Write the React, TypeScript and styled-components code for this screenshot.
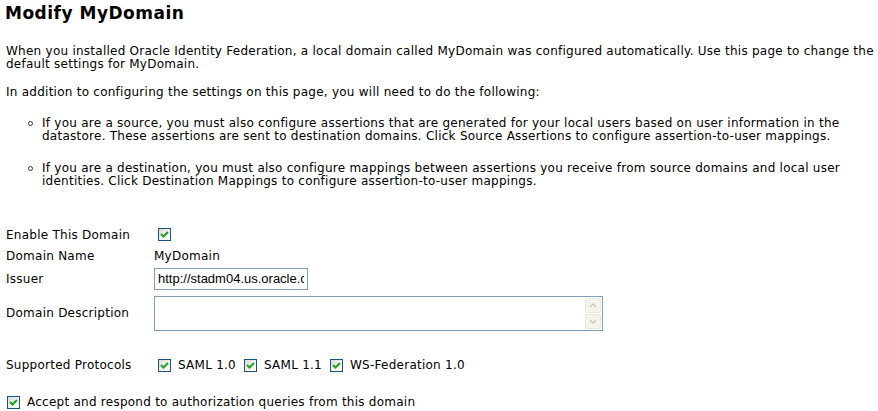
import React from "react";
import styled, { createGlobalStyle } from "styled-components";

const Global = createGlobalStyle`
  html, body { margin: 0; padding: 0; background: #fff; }
  body { font-family: "DejaVu Sans", Verdana, sans-serif; font-size: 12px; letter-spacing: 0.25px; color: #000; }
`;

const Page = styled.div`
  padding: 3px 0 0 6px;
`;

const Title = styled.h1`
  margin: 0 0 0 -1px;
  font-size: 17px;
  letter-spacing: 0.5px;
  line-height: 20px;
  font-weight: bold;
`;

const Para = styled.p<{ $top: number }>`
  margin: ${(p) => p.$top}px -6px 0 0;
  line-height: 13px;
`;

const List = styled.ul`
  margin: 18px 0 0 0;
  padding: 0 0 0 36px;
  list-style: none;
`;

const Item = styled.li`
  position: relative;
  line-height: 13px;
  margin-bottom: 19px;
  &:last-child { margin-bottom: 0; }
  &::before {
    content: "";
    position: absolute;
    left: -14px;
    top: 4px;
    width: 3px;
    height: 3px;
    border: 1px solid #333;
    border-radius: 50%;
  }
`;

const Form = styled.div`
  display: grid;
  grid-template-columns: 148px auto;
  margin-top: 36px;
  align-items: center;
`;

const Label = styled.div<{ $h: number }>`
  height: ${(p) => p.$h}px;
  display: flex;
  align-items: center;
`;

const Value = styled.div<{ $h: number }>`
  height: ${(p) => p.$h}px;
  display: flex;
  align-items: center;
  gap: 8px;
`;

const Box = styled.span`
  display: inline-flex;
  width: 13px;
  height: 13px;
  box-sizing: border-box;
  border: 1px solid #1c5180;
  background: linear-gradient(135deg, #dcdcd7 0%, #f4f4f0 60%, #ffffff 100%);
  align-items: center;
  justify-content: center;
  flex: none;
`;

const CheckWrap = styled.span<{ $ml: number }>`
  display: inline-flex;
  align-items: center;
  margin-left: ${(p) => p.$ml}px;
  gap: 7px;
`;

const Check = ({ ml = 4, label }: { ml?: number; label?: string }) => (
  <CheckWrap $ml={ml}>
    <Box>
      <svg width="9" height="9" viewBox="0 0 9 9">
        <path d="M1 4 L3.5 6.5 L8 2" stroke="#21a121" strokeWidth="2" fill="none" />
      </svg>
    </Box>
    {label && <span>{label}</span>}
  </CheckWrap>
);

const TextInput = styled.input`
  width: 154px;
  height: 22px;
  box-sizing: border-box;
  border: 1px solid #7f9db9;
  font-family: "Liberation Sans", Arial, sans-serif;
  font-size: 13px;
  letter-spacing: 0;
  padding: 0 3px;
  margin: 0;
  outline: none;
`;

const AreaWrap = styled.div`
  width: 449px;
  height: 35px;
  box-sizing: border-box;
  border: 1px solid #7f9db9;
  display: flex;
  background: #fff;
`;

const Area = styled.textarea`
  flex: 1;
  border: none;
  resize: none;
  outline: none;
  margin: 0;
  padding: 2px;
  overflow: hidden;
`;

const Scroll = styled.div`
  width: 16px;
  display: flex;
  flex-direction: column;
  padding: 1px 1px 1px 0;
  gap: 1px;
`;

const ScrollBtn = styled.div`
  flex: 1;
  border: 1px solid #e8e8e0;
  border-radius: 2px;
  background: #f4f3ee;
  display: flex;
  align-items: center;
  justify-content: center;
`;

const Spacer = styled.div<{ $h: number }>`
  grid-column: 1 / span 2;
  height: ${(p) => p.$h}px;
`;

const AcceptRow = styled.div`
  margin-top: 19px;
  display: flex;
  align-items: center;
  height: 16px;
`;

export default function App() {
  return (
    <Page>
      <Global />
      <Title>Modify MyDomain</Title>
      <Para $top={22}>
        When you installed Oracle Identity Federation, a local domain called MyDomain was configured automatically. Use this page to change the default settings for MyDomain.
      </Para>
      <Para $top={15}>
        In addition to configuring the settings on this page, you will need to do the following:
      </Para>
      <List>
        <Item>
          If you are a source, you must also configure assertions that are generated for your local users based on user information in the datastore. These assertions are sent to destination domains. Click Source Assertions to configure assertion-to-user mappings.
        </Item>
        <Item>
          If you are a destination, you must also configure mappings between assertions you receive from source domains and local user identities. Click Destination Mappings to configure assertion-to-user mappings.
        </Item>
      </List>
      <Form>
        <Label $h={21}>Enable This Domain</Label>
        <Value $h={21}><Check /></Value>
        <Label $h={21}>Domain Name</Label>
        <Value $h={21}>MyDomain</Value>
        <Label $h={25}>Issuer</Label>
        <Value $h={25}><TextInput defaultValue="http://stadm04.us.oracle.com:7777" /></Value>
        <Label $h={44}>Domain Description</Label>
        <Value $h={44}>
          <AreaWrap>
            <Area />
            <Scroll>
              <ScrollBtn>
                <svg width="8" height="5" viewBox="0 0 8 5"><path d="M1 4 L4 1 L7 4" stroke="#c8c8c0" strokeWidth="1.5" fill="none" /></svg>
              </ScrollBtn>
              <ScrollBtn>
                <svg width="8" height="5" viewBox="0 0 8 5"><path d="M1 1 L4 4 L7 1" stroke="#c8c8c0" strokeWidth="1.5" fill="none" /></svg>
              </ScrollBtn>
            </Scroll>
          </AreaWrap>
        </Value>
        <Spacer $h={20} />
        <Label $h={20}>Supported Protocols</Label>
        <Value $h={20}>
          <Check label="SAML 1.0" />
          <Check ml={0} label="SAML 1.1" />
          <Check ml={0} label="WS-Federation 1.0" />
        </Value>
      </Form>
      <AcceptRow>
        <Check ml={1} label="Accept and respond to authorization queries from this domain" />
      </AcceptRow>
    </Page>
  );
}
